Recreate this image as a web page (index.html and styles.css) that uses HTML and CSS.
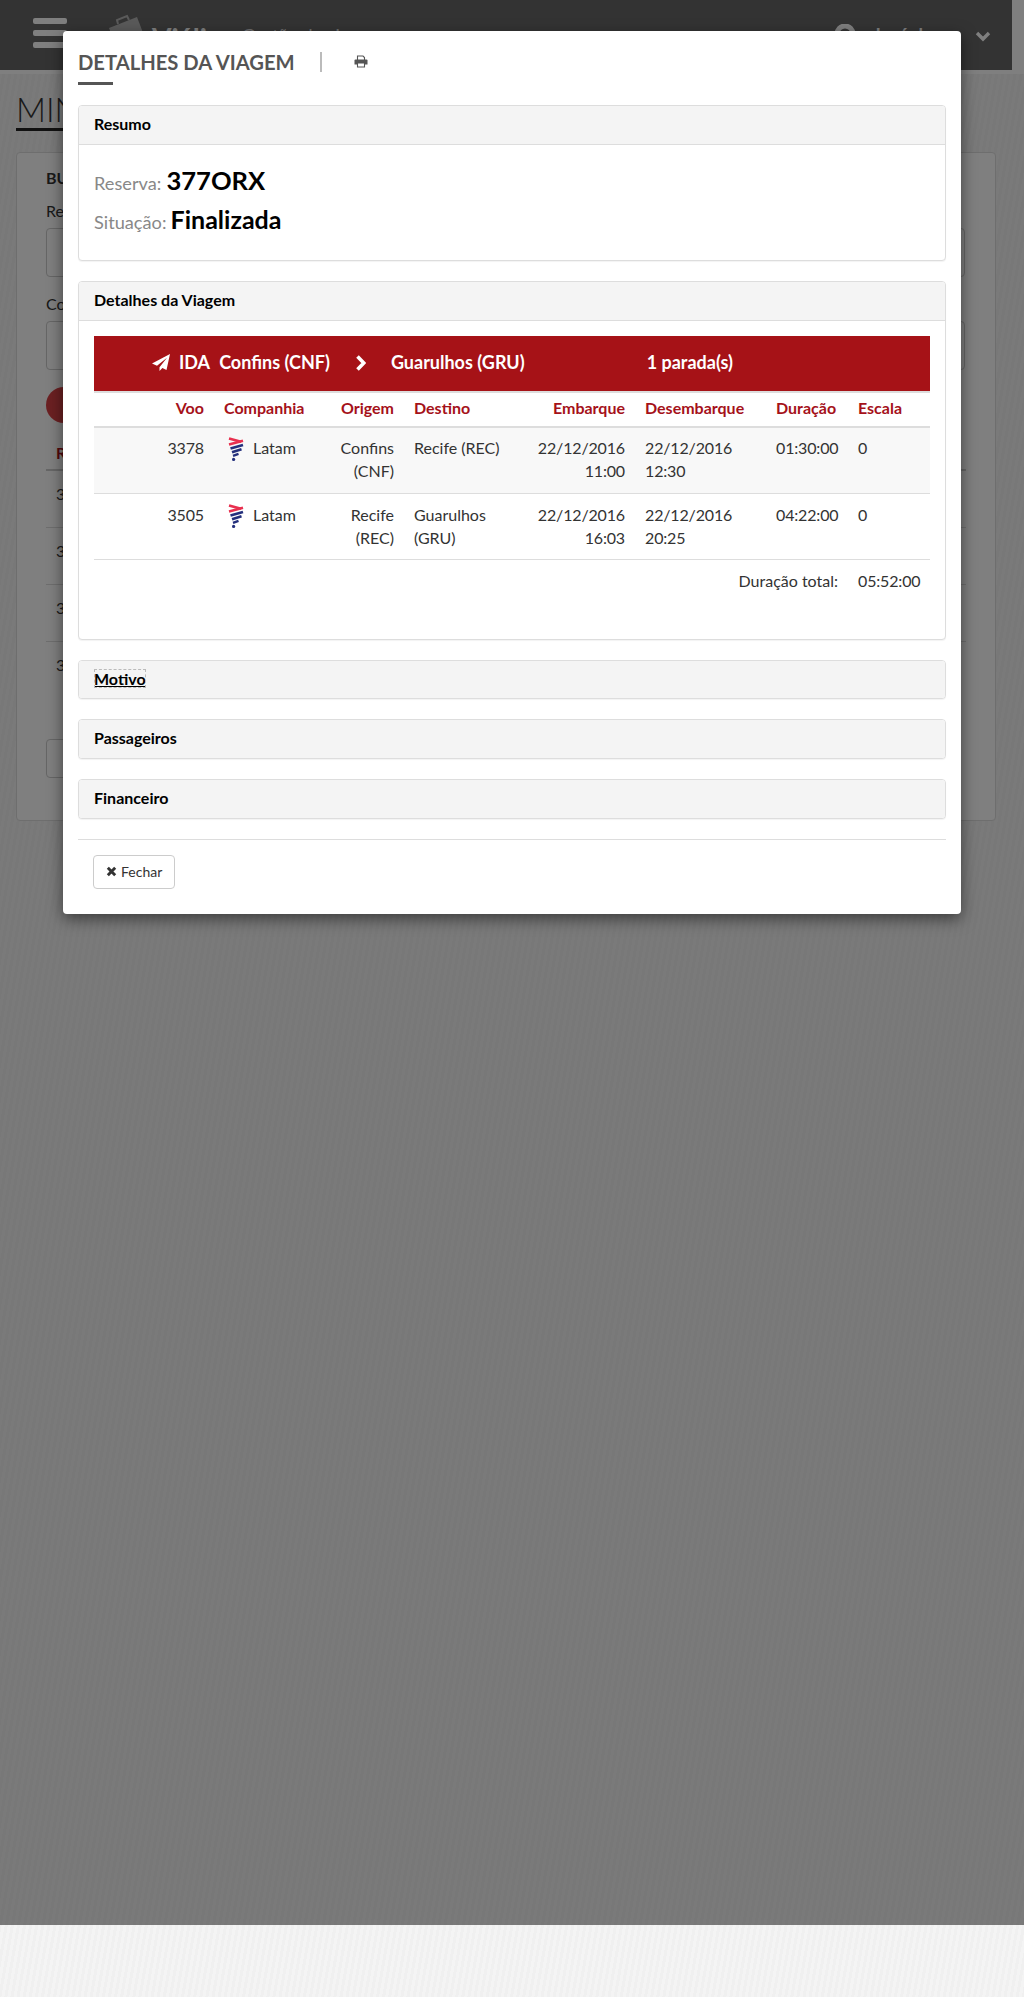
FILE: index.html
```html
<!DOCTYPE html>
<html lang="pt-BR">
<head>
  <meta http-equiv="Content-Type" content="text/html;charset=UTF-8">
  <meta name="viewport" content="width=device-width, initial-scale=1.0">
  <title>Detalhes da Viagem</title>
  <link rel="stylesheet" href="styles.css">
</head>
<body>
  <div class="page">
    <header class="topbar">
      <div class="burger"><span></span><span></span><span></span></div>
      <svg class="logo-case" viewBox="0 0 40 40" width="40" height="40">
        <path d="M2 14 L30 3 L38 24 L10 36 Z" fill="#b5b5b5"/>
        <path d="M11 10 L10 6 L20 2 L22 6" fill="none" stroke="#b5b5b5" stroke-width="2"/>
      </svg>
      <span class="logo-name">Viálin</span>
      <span class="logo-sub">Gestão de viagens</span>
      <div class="topbar-user">
        <svg class="user-icon" viewBox="0 0 24 24" width="24" height="24">
          <circle cx="12" cy="10" r="8" fill="none" stroke="#fff" stroke-width="5"/>
        </svg>
        <span class="user-name">José da Silva</span>
        <svg class="user-caret" viewBox="0 0 16 11" width="16" height="11">
          <path d="M2 2 L8 8 L14 2" fill="none" stroke="#fff" stroke-width="3.4"/>
        </svg>
      </div>
    </header>

    <main class="content">
      <h2 class="page-title">MIN</h2>
      <section class="search-card">
        <h4 class="search-title">BU</h4>
        <label class="search-label">Re</label>
        <div class="search-input"></div>
        <label class="search-label">Co</label>
        <div class="search-input"></div>
        <div class="search-btn"></div>
        <div class="bg-head">R</div>
        <div class="bg-row">3</div>
        <div class="bg-row">3</div>
        <div class="bg-row">3</div>
        <div class="bg-row bg-row-last">3</div>
        <div class="bg-pager"></div>
      </section>
    </main>
  </div>

  <div class="backdrop">
    <div class="modal">
      <div class="modal-head">
        <h3 class="modal-title">DETALHES DA VIAGEM</h3>
        <span class="modal-sep"></span>
        <svg class="print-icon" viewBox="0 0 14 13" width="14" height="13">
          <path d="M3.5 5 V1 H9 L10.5 2.5 V5" fill="none" stroke="#555" stroke-width="1.1"/>
          <path d="M1.5 4.6 H12.5 Q13.5 4.6 13.5 5.6 V9.6 H0.5 V5.6 Q0.5 4.6 1.5 4.6 Z" fill="#555"/>
          <path d="M3.5 8 H10.5 V12 H3.5 Z" fill="#fff" stroke="#555" stroke-width="1.1"/>
        </svg>
      </div>
      <div class="modal-rule"></div>

      <div class="panel">
        <div class="panel-heading">Resumo</div>
        <div class="panel-body panel-summary">
          <p class="summary-line"><span class="summary-label">Reserva:</span> <strong class="summary-value summary-code">377ORX</strong></p>
          <p class="summary-line"><span class="summary-label">Situação:</span> <strong class="summary-value">Finalizada</strong></p>
        </div>
      </div>

      <div class="panel">
        <div class="panel-heading">Detalhes da Viagem</div>
        <div class="panel-body panel-trip">
          <div class="leg-bar">
            <svg class="leg-plane" viewBox="0 0 18 16" width="18" height="17" preserveAspectRatio="none">
              <path d="M18 0 L0 9 L5 11 L15 3.5 L7.5 12.4 V16 L10.4 13.2 L14.5 15 Z" fill="#fff"/>
            </svg>
            <span class="leg-type">IDA</span>
            <span class="leg-from">Confins (CNF)</span>
            <svg class="leg-arrow" viewBox="0 0 11 16" width="11" height="16">
              <path d="M2.5 1.5 L8.8 8 L2.5 14.5" fill="none" stroke="#fff" stroke-width="3.6"/>
            </svg>
            <span class="leg-to">Guarulhos (GRU)</span>
            <span class="leg-stops">1 parada(s)</span>
          </div>
          <table class="trip-table">
            <thead>
              <tr>
                <th class="col-flight num">Voo</th>
                <th class="col-company">Companhia</th>
                <th class="col-from num">Origem</th>
                <th class="col-to">Destino</th>
                <th class="col-dep num">Embarque</th>
                <th class="col-arr">Desembarque</th>
                <th class="col-time">Duração</th>
                <th class="col-stop">Escala</th>
              </tr>
            </thead>
            <tbody>
              <tr class="row-odd">
                <td class="num digits">3378</td>
                <td>
                  <span class="airline">
                    <svg class="airline-logo" viewBox="0 0 16 24" width="16" height="24">
                      <path d="M1 1.4 L13 4.8" stroke="#e8304f" stroke-width="2.6" fill="none"/>
                      <path d="M1 7.6 L15 3.8" stroke="#e8304f" stroke-width="2.6" fill="none"/>
                      <path d="M2.5 11.6 L15 8" stroke="#232f7c" stroke-width="2.6" fill="none"/>
                      <path d="M4 15.2 L13.5 12.2" stroke="#232f7c" stroke-width="2.6" fill="none"/>
                      <path d="M5 18.8 L10.5 16.8" stroke="#232f7c" stroke-width="2.4" fill="none"/>
                      <circle cx="5.6" cy="22.4" r="1.6" fill="#232f7c"/>
                    </svg>
                    Latam
                  </span>
                </td>
                <td class="num">Confins (CNF)</td>
                <td>Recife (REC)</td>
                <td class="num digits">22/12/2016 11:00</td>
                <td class="digits">22/12/2016 12:30</td>
                <td class="digits">01:30:00</td>
                <td>0</td>
              </tr>
              <tr class="row-even">
                <td class="num digits">3505</td>
                <td>
                  <span class="airline">
                    <svg class="airline-logo" viewBox="0 0 16 24" width="16" height="24">
                      <path d="M1 1.4 L13 4.8" stroke="#e8304f" stroke-width="2.6" fill="none"/>
                      <path d="M1 7.6 L15 3.8" stroke="#e8304f" stroke-width="2.6" fill="none"/>
                      <path d="M2.5 11.6 L15 8" stroke="#232f7c" stroke-width="2.6" fill="none"/>
                      <path d="M4 15.2 L13.5 12.2" stroke="#232f7c" stroke-width="2.6" fill="none"/>
                      <path d="M5 18.8 L10.5 16.8" stroke="#232f7c" stroke-width="2.4" fill="none"/>
                      <circle cx="5.6" cy="22.4" r="1.6" fill="#232f7c"/>
                    </svg>
                    Latam
                  </span>
                </td>
                <td class="num">Recife (REC)</td>
                <td>Guarulhos (GRU)</td>
                <td class="num digits">22/12/2016 16:03</td>
                <td class="digits">22/12/2016 20:25</td>
                <td class="digits">04:22:00</td>
                <td>0</td>
              </tr>
            </tbody>
            <tfoot>
              <tr>
                <td class="num" colspan="7">Duração total:</td>
                <td class="digits">05:52:00</td>
              </tr>
            </tfoot>
          </table>
        </div>
      </div>

      <div class="panel"><div class="panel-heading panel-closed panel-motivo"><a class="panel-link">Motivo</a></div></div>
      <div class="panel"><div class="panel-heading panel-closed">Passageiros</div></div>
      <div class="panel"><div class="panel-heading panel-closed">Financeiro</div></div>

      <div class="modal-footer">
        <button class="btn-close" type="button">
          <svg class="close-icon" viewBox="0 0 12 12" width="11" height="11">
            <path d="M2 2 L10 10 M10 2 L2 10" fill="none" stroke="#333" stroke-width="3.2"/>
          </svg>
          Fechar
        </button>
      </div>
    </div>
  </div>
</body>
</html>
```

FILE: styles.css
```css
* {
  margin: 0;
  padding: 0;
  box-sizing: border-box;
}

html, body {
  height: 1997px;
  overflow: hidden;
}

body {
  position: relative;
  font-family: 'Lato', 'Open Sans', sans-serif;
  font-size: 16px;
  line-height: 23px;
  color: #333;
  background-color: #f2f2f2;
  background-image: repeating-linear-gradient(100deg, #f4f4f4 0, #f4f4f4 3px, #f0f0f0 3px, #f0f0f0 6px);
}

/* page under the backdrop */
.page {
  width: 1012px;
}

.topbar {
  position: relative;
  display: flex;
  align-items: flex-start;
  height: 74px;
  border-bottom: 4px solid #fff;
  background: #666;
  box-shadow: 12px 0 0 #fff;
}

.burger {
  display: flex;
  flex-direction: column;
  gap: 6px;
  width: 34px;
  margin: 18px 0 0 33px;
}

.burger span {
  display: block;
  height: 6px;
  border-radius: 2px;
  background: #fff;
}

.logo-case {
  margin: 14px 0 0 40px;
  flex: none;
}

.logo-name {
  flex: none;
  width: 85px;
  height: 23px;
  margin: 27px 0 0 5px;
  font-size: 28px;
  font-weight: 700;
  color: #fff;
}

.logo-sub {
  flex: none;
  margin: 24px 0 0 5px;
  font-size: 18px;
  color: #ddd;
}

.topbar-user {
  display: flex;
  align-items: flex-start;
  margin: 24px 21px 0 auto;
}

.user-name {
  flex: none;
  width: 95px;
  margin-left: 16px;
  font-size: 18px;
  font-weight: 700;
  color: #fff;
}

.user-caret {
  margin: 7px 0 0 7px;
}

.content {
  padding: 0 16px;
}

.page-title {
  width: 500px;
  margin-top: 17px;
  border-bottom: 3px solid #222;
  font-size: 33px;
  line-height: 37px;
  font-weight: 300;
  color: #333;
}

.search-card {
  height: 669px;
  margin-top: 21px;
  padding: 13px 29px;
  border: 1px solid #ddd;
  border-radius: 4px;
  background: #fff;
}

.search-title {
  font-size: 16px;
  font-weight: 700;
  color: #333;
}

.search-label {
  display: block;
  margin-top: 10px;
  height: 23px;
}

.search-input {
  width: 919px;
  height: 49px;
  margin-top: 6px;
  border: 1px solid #ccc;
  border-radius: 4px;
}

.search-input + .search-label {
  margin-top: 15px;
}

.search-btn {
  width: 200px;
  height: 36px;
  margin-top: 17px;
  border-radius: 18px;
  background: #d64045;
}

.bg-head {
  height: 48px;
  padding: 18px 10px 0;
  border-bottom: 2px solid #ccc;
  font-weight: 700;
  color: #a5111a;
}

.bg-row {
  height: 57px;
  padding: 11px 10px 0;
  border-bottom: 1px solid #ddd;
}

.bg-row-last {
  height: 55px;
  border-bottom: 0;
}

.bg-pager {
  width: 200px;
  height: 39px;
  margin-top: 42px;
  border: 1px solid #ccc;
  border-radius: 4px;
}

/* backdrop and modal */
.backdrop {
  position: absolute;
  top: 0;
  left: 0;
  width: 1024px;
  height: 1925px;
  padding-top: 31px;
  background: rgba(0, 0, 0, 0.5);
}

.modal {
  width: 898px;
  height: 883px;
  margin-left: 63px;
  padding: 0 15px;
  border-radius: 4px;
  background: #fff;
  box-shadow: 0 5px 15px rgba(0, 0, 0, 0.5);
}

.modal-head {
  display: flex;
  align-items: center;
  height: 51px;
  padding-top: 10px;
}

.modal-title {
  font-size: 20.2px;
  line-height: 24px;
  font-weight: 700;
  color: #555;
}

.modal-sep {
  width: 2px;
  height: 20px;
  margin-left: 25px;
  background: #bbb;
}

.print-icon {
  margin-left: 32px;
}

.modal-rule {
  width: 35px;
  height: 3px;
  background: #555;
  margin-bottom: 20px;
}

.panel {
  margin-bottom: 20px;
  border: 1px solid #ddd;
  border-radius: 4px;
  background: #fff;
  box-shadow: 0 1px 1px rgba(0, 0, 0, 0.05);
}

.panel-heading {
  height: 39px;
  padding: 7px 15px;
  border-bottom: 1px solid #ddd;
  background: #f4f4f4;
  font-weight: 700;
  line-height: 22px;
  color: #000;
  border-radius: 3px 3px 0 0;
}

.panel-closed {
  height: 38px;
  border-bottom: 0;
  border-radius: 3px;
}

.panel-motivo {
  height: 37px;
}

.panel-link {
  text-decoration: underline;
  outline: 1px dashed #bbb;
  outline-offset: -1px;
}

.panel-summary {
  height: 115px;
  padding: 16px 15px 15px;
}

.summary-line {
  height: 39px;
  line-height: 39px;
}

.summary-label {
  font-size: 18.2px;
  color: #888;
}

.summary-value {
  font-size: 25px;
  font-weight: 700;
  color: #000;
}

.summary-code {
  margin-left: 1px;
  font-size: 25.6px;
}

.panel-trip {
  padding: 15px 15px 38px;
}

.leg-bar {
  display: flex;
  align-items: center;
  height: 55px;
  padding: 0 0 2px 58px;
  background: #a61217;
  color: #fff;
  font-size: 18px;
  font-weight: 700;
}

.leg-type {
  margin-left: 9px;
}

.leg-from {
  margin-left: 9px;
}

.leg-arrow {
  margin-left: 25px;
}

.leg-to {
  margin-left: 25px;
}

.leg-stops {
  margin-left: 122px;
}

.trip-table {
  width: 836px;
  table-layout: fixed;
  border-collapse: collapse;
  border-top: 2px solid #ddd;
}

.trip-table th,
.trip-table td {
  padding: 9px 10px;
  vertical-align: top;
  text-align: left;
}

.trip-table .num {
  text-align: right;
}

.trip-table .digits {
  letter-spacing: -0.15px;
}

.trip-table th {
  padding: 3px 10px 7px;
  border-bottom: 2px solid #ddd;
  font-weight: 700;
  color: #a5111a;
}

.trip-table tbody td {
  padding: 8px 10px 11px;
  border-bottom: 1px solid #ddd;
}

.trip-table .row-even td {
  padding: 9px 10px 10px;
}

.trip-table .row-odd td {
  background: #f8f8f8;
}

.col-flight { width: 120px; }
.col-company { width: 110px; }
.col-from { width: 80px; }
.col-to { width: 121px; }
.col-dep { width: 110px; }
.col-arr { width: 131px; }
.col-time { width: 82px; }
.col-stop { width: 82px; }

.airline {
  display: flex;
  align-items: flex-start;
  gap: 9px;
  padding-left: 4px;
}

.airline-logo {
  flex: none;
  margin-top: 1px;
}

.modal-footer {
  height: 74px;
  padding: 15px 0 0 15px;
  border-top: 1px solid #ddd;
}

.btn-close {
  display: flex;
  align-items: center;
  gap: 4px;
  width: 82px;
  height: 34px;
  padding: 0 0 1px 12px;
  border: 1px solid #ccc;
  border-radius: 4px;
  background: #fff;
  font-family: 'Lato', sans-serif;
  font-size: 14px;
  color: #333;
}
```
